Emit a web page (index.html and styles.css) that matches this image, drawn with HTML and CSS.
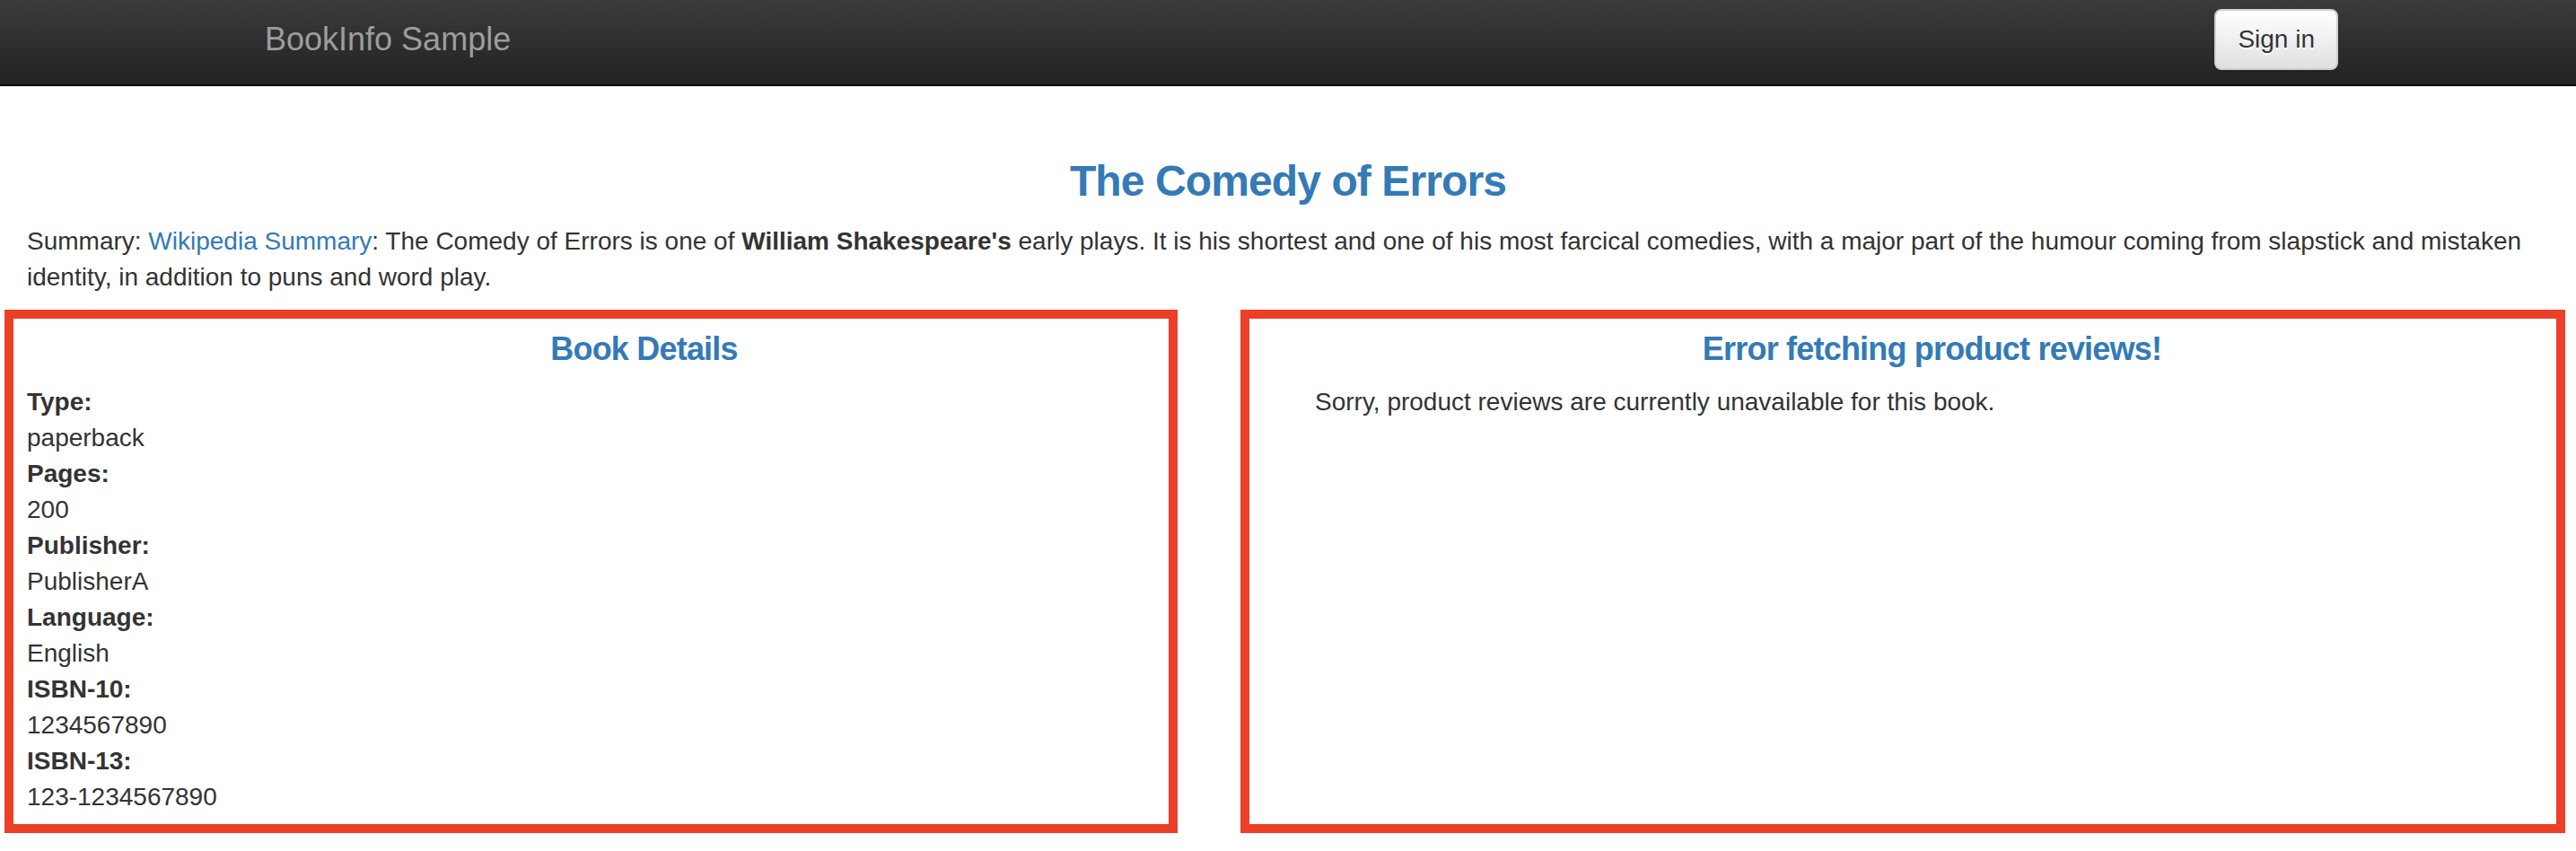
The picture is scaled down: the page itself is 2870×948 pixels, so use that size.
FILE: index.html
```html
<!DOCTYPE html>
<html lang="en">
<head>
<meta charset="utf-8">
<title>Simple Bookstore App</title>
<link rel="stylesheet" href="styles.css">
</head>
<body>
<nav class="navbar">
  <div class="nav-inner">
    <a class="brand" href="#">BookInfo Sample</a>
    <button class="btn" type="button">Sign in</button>
  </div>
</nav>
<main class="page">
  <h3 class="title">The Comedy of Errors</h3>
  <p class="summary">Summary: <a class="link" href="#">Wikipedia Summary</a>: The Comedy of Errors is one of <b>William Shakespeare's</b> early plays. It is his shortest and one of his most farcical comedies, with a major part of the humour coming from slapstick and mistaken identity, in addition to puns and word play.</p>
  <div class="row">
    <section class="col">
      <h4 class="col-title">Book Details</h4>
      <dl class="details">
        <dt>Type:</dt><dd>paperback</dd>
        <dt>Pages:</dt><dd>200</dd>
        <dt>Publisher:</dt><dd>PublisherA</dd>
        <dt>Language:</dt><dd>English</dd>
        <dt>ISBN-10:</dt><dd>1234567890</dd>
        <dt>ISBN-13:</dt><dd>123-1234567890</dd>
      </dl>
      <div class="highlight hl-left"></div>
    </section>
    <section class="col">
      <h4 class="col-title">Error fetching product reviews!</h4>
      <p class="message">Sorry, product reviews are currently unavailable for this book.</p>
      <div class="highlight hl-right"></div>
    </section>
  </div>
</main>
</body>
</html>
```
FILE: styles.css
```css
* {
  box-sizing: border-box;
}

html, body {
  margin: 0;
  padding: 0;
  background: #fff;
}

body {
  font-family: "Liberation Sans", Arial, Helvetica, sans-serif;
  font-size: 28px;
  line-height: 40px;
  color: #333;
  overflow: hidden;
}

.navbar {
  height: 96px;
  margin-bottom: 40px;
  background: linear-gradient(to bottom, #3b3b3b 0%, #222 100%);
  border-bottom: 2px solid #080808;
}

.nav-inner {
  width: 2340px;
  margin: 0 auto;
  display: flex;
  justify-content: space-between;
  align-items: flex-start;
}

.brand {
  display: block;
  padding: 24px 30px 0 30px;
  font-size: 36px;
  line-height: 40px;
  color: #9d9d9d;
  text-decoration: none;
}

.btn {
  margin-top: 10px;
  height: 68px;
  padding: 12px 24px;
  font-family: "Liberation Sans", Arial, Helvetica, sans-serif;
  font-size: 28px;
  line-height: 40px;
  color: #333;
  background: linear-gradient(to bottom, #fff 0%, #e0e0e0 100%);
  border: 2px solid #cfcfcf;
  border-radius: 8px;
  text-shadow: 0 2px 0 #fff;
  box-shadow: inset 0 2px 0 rgba(255, 255, 255, 0.15), 0 2px 2px rgba(0, 0, 0, 0.075);
}

.page {
  display: flow-root;
  padding: 0 30px;
}

.title {
  margin: 40px 0 20px;
  font-size: 48px;
  line-height: 52.8px;
  font-weight: bold;
  letter-spacing: -0.9px;
  text-align: center;
  color: #337ab7;
}

.summary {
  margin: 0 0 20px;
}

.summary b {
  font-weight: bold;
}

.link {
  color: #337ab7;
  text-decoration: none;
}

.row {
  display: grid;
  grid-template-columns: 1fr 1fr;
  margin: 0 -30px;
  position: relative;
}

.col {
  position: relative;
  padding: 0 30px;
}

.col-title {
  margin: 20px 0 20px;
  font-size: 36px;
  line-height: 39.6px;
  font-weight: bold;
  letter-spacing: -0.8px;
  text-align: center;
  color: #337ab7;
}

.details {
  margin: 0 0 20px;
}

.details dt {
  font-weight: bold;
}

.details dd {
  margin: 0;
}

.message {
  margin: 0 0 20px;
}

.highlight {
  position: absolute;
  top: -4px;
  height: 583px;
  border: 10px solid #eb4027;
  pointer-events: none;
}

.hl-left {
  left: 5px;
  width: 1307px;
}

.hl-right {
  left: -53px;
  width: 1476px;
}
```
